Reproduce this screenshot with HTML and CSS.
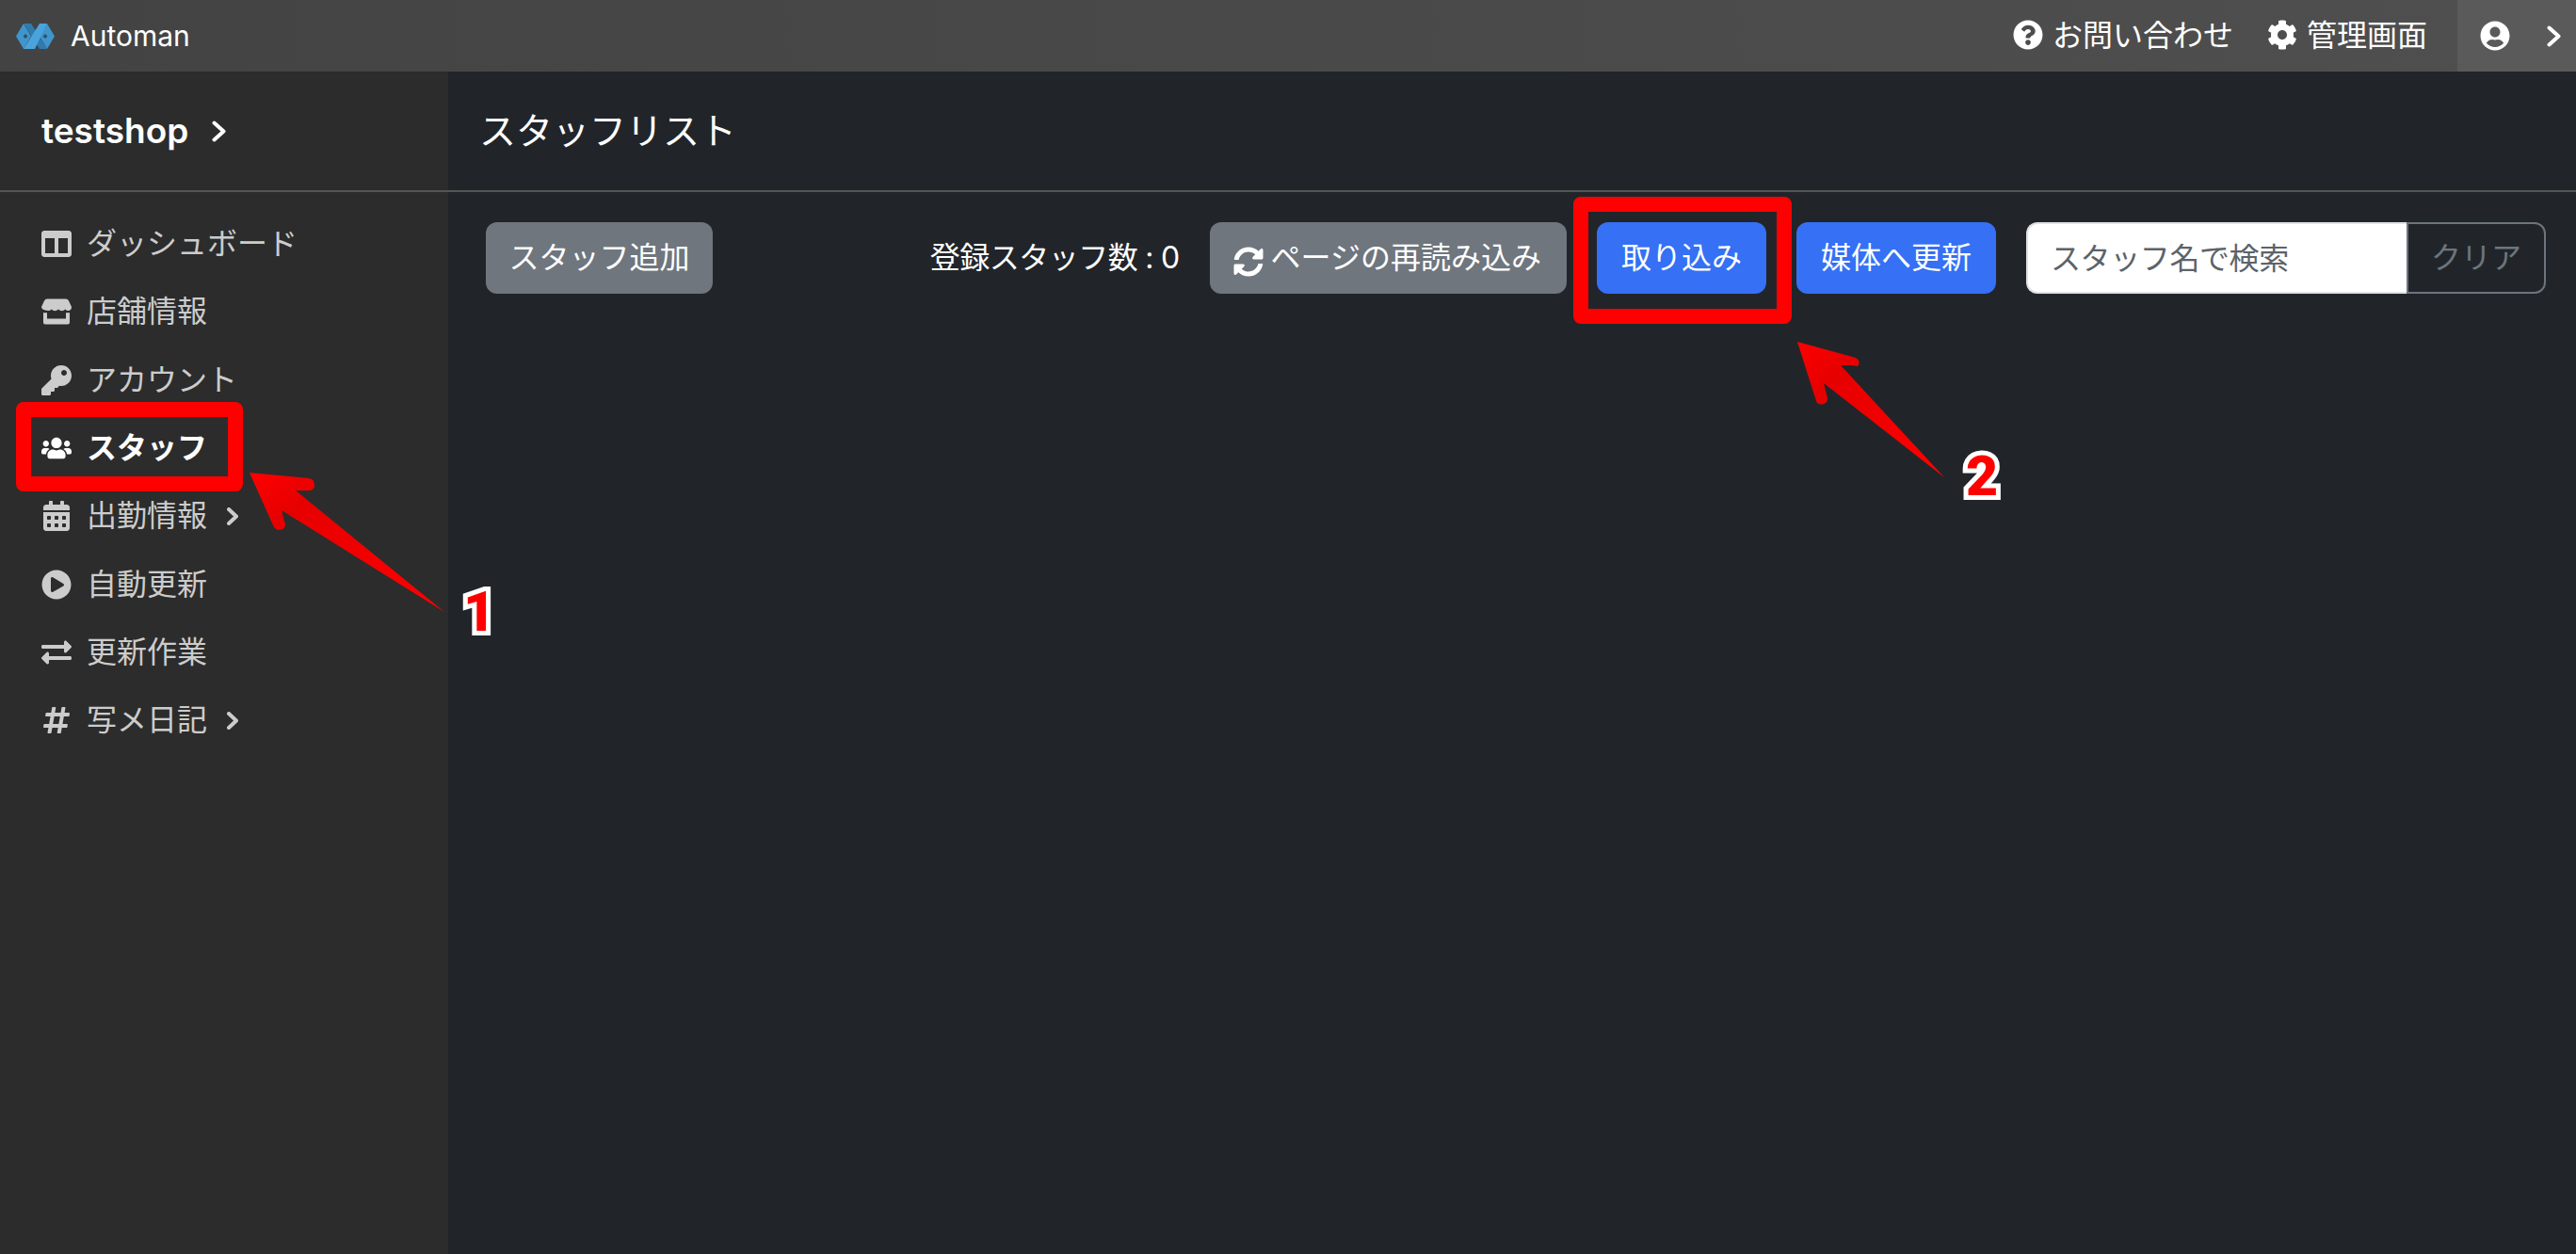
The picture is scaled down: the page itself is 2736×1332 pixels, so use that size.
FILE: index.html
```html
<!DOCTYPE html>
<html lang="ja">
<head>
  <meta charset="UTF-8" />
  <meta name="viewport" content="width=device-width, initial-scale=1.0" />
  <title>Automan</title>
  <link rel="stylesheet" href="styles.css">
</head>
<body>
  <header class="topbar">
    <a class="brand">
      <svg class="brand-logo" viewBox="0 0 41 27">
        <path fill="#3f95cc" d="M0 13.500 8 0l8 13.500L8 27z"/>
        <path fill="#3f95cc" d="M41 13.500 33 0l-8 13.500L33 27z"/>
        <path fill="#2f7bad" d="M8 0h8l17 27h-8z"/>
        <path fill="#4aa3dc" d="M25 0h8L20 27H8z"/>
        <path fill="#2d5068" d="m10 11 2.500 2.500-2.500 2.500-2.500-2.500zM31 11l2.500 2.500-2.500 2.500-2.500-2.500z"/>
      </svg>
      <span class="brand-name">Automan</span>
    </a>
    <nav class="topbar-links">
      <a class="topbar-link">
        <svg class="icon" viewBox="0 0 512 512"><path d="M504 256c0 136.997-111.043 248-248 248S8 392.997 8 256C8 119.083 119.043 8 256 8s248 111.083 248 248zM262.655 90c-54.497 0-89.255 22.957-116.549 63.758-3.536 5.286-2.353 12.415 2.715 16.258l34.699 26.31c5.205 3.947 12.621 3.008 16.665-2.122 17.864-22.658 30.113-35.797 57.303-35.797 20.429 0 45.698 13.148 45.698 32.958 0 14.976-12.363 22.667-32.534 33.976C247.128 238.528 216 254.941 216 296v4c0 6.627 5.373 12 12 12h56c6.627 0 12-5.373 12-12v-1.333c0-28.462 83.186-29.647 83.186-106.667 0-58.002-60.165-102-116.531-102zM256 338c-25.365 0-46 20.635-46 46 0 25.364 20.635 46 46 46s46-20.636 46-46c0-25.365-20.635-46-46-46z"/></svg>
        <span>お問い合わせ</span>
      </a>
      <a class="topbar-link">
        <svg class="icon" viewBox="0 0 512 512"><path d="M487.4 315.7l-42.6-24.6c4.3-23.2 4.3-47 0-70.2l42.6-24.6c4.9-2.8 7.1-8.6 5.5-14-11.1-35.6-30-67.8-54.7-94.6-3.8-4.1-10-5.1-14.8-2.3L380.8 110c-17.9-15.4-38.5-27.3-60.8-35.1V25.800c0-5.600-3.900-10.500-9.400-11.700-36.700-8.200-74.300-7.800-109.200 0-5.500 1.200-9.400 6.100-9.400 11.700V75c-22.200 7.900-42.800 19.800-60.800 35.100L88.700 85.500c-4.900-2.800-11-1.900-14.800 2.300-24.700 26.700-43.600 58.900-54.700 94.600-1.700 5.400.6 11.200 5.500 14L67.300 221c-4.300 23.200-4.300 47 0 70.200l-42.600 24.600c-4.900 2.800-7.100 8.600-5.500 14 11.100 35.600 30 67.800 54.700 94.600 3.800 4.100 10 5.100 14.800 2.300l42.600-24.600c17.900 15.400 38.500 27.300 60.800 35.100v49.200c0 5.600 3.900 10.500 9.400 11.700 36.700 8.200 74.300 7.800 109.200 0 5.500-1.200 9.400-6.100 9.400-11.700v-49.200c22.200-7.900 42.800-19.800 60.800-35.100l42.600 24.600c4.900 2.800 11 1.900 14.800-2.300 24.700-26.700 43.600-58.900 54.700-94.600 1.500-5.500-.7-11.300-5.600-14.100zM256 336c-44.100 0-80-35.900-80-80s35.900-80 80-80 80 35.900 80 80-35.900 80-80 80z"/></svg>
        <span>管理画面</span>
      </a>
    </nav>
    <a class="topbar-user">
      <svg class="icon" viewBox="0 0 496 512"><path d="M248 8C111 8 0 119 0 256s111 248 248 248 248-111 248-248S385 8 248 8zm0 96c48.600 0 88 39.400 88 88s-39.400 88-88 88-88-39.400-88-88 39.400-88 88-88zm0 344c-58.700 0-111.300-26.600-146.500-68.200 18.800-35.400 55.600-59.800 98.500-59.800 2.400 0 4.800.4 7.100 1.100 13 4.200 26.600 6.900 40.900 6.900 14.300 0 28-2.700 40.900-6.900 2.300-.7 4.700-1.100 7.100-1.100 42.900 0 79.700 24.400 98.500 59.800C359.300 421.400 306.700 448 248 448z"/></svg>
      <svg class="chevron chevron-lg" viewBox="0 0 15 23"><path d="M2.500 2.500l10 9-10 9"/></svg>
    </a>
  </header>

  <div class="layout">
    <aside class="sidebar">
      <a class="shop-name">
        <span>testshop</span>
        <svg class="chevron chevron-lg" viewBox="0 0 15 23"><path d="M2.500 2.500l10 9-10 9"/></svg>
      </a>
      <ul class="side-menu">
        <li class="side-item">
          <svg class="icon" viewBox="0 0 512 512"><path d="M464 32H48C21.490 32 0 53.490 0 80v352c0 26.510 21.490 48 48 48h416c26.510 0 48-21.490 48-48V80c0-26.510-21.490-48-48-48zM224 416H64V160h160v256zm224 0H288V160h160v256z"/></svg>
          <span>ダッシュボード</span>
        </li>
        <li class="side-item">
          <svg class="icon" viewBox="0 0 32 27"><path d="M6 0h20q2 0 3 2l3 6.500q0 3.500-3 4-2.200.3-3.700-1.500-1.500 1.800-3.600 1.800t-3.700-1.800q-1.600 1.800-3.700 1.800t-3.600-1.800Q9.200 12.800 7 12.500q-7-.5-7-4L3 2q1-2 3-2z"/><path d="M2 14.500q2.500.6 4 0V21h20v-6.500q1.500.6 4 0V25q0 2-2 2H4q-2 0-2-2z"/></svg>
          <span>店舗情報</span>
        </li>
        <li class="side-item">
          <svg class="icon" viewBox="0 0 512 512"><path d="M512 176.001C512 273.203 433.202 352 336 352c-11.220 0-22.190-1.062-32.827-3.069l-24.012 27.014A23.999 23.999 0 0 1 261.223 384H224v40c0 13.255-10.745 24-24 24h-40v40c0 13.255-10.745 24-24 24H24c-13.255 0-24-10.745-24-24v-78.059c0-6.365 2.529-12.470 7.029-16.971l161.802-161.802C163.108 213.814 160 195.271 160 176 160 78.798 238.797.001 335.999 0 433.488-.001 512 78.511 512 176.001zM336 128c0 26.510 21.490 48 48 48s48-21.490 48-48-21.490-48-48-48-48 21.490-48 48z"/></svg>
          <span>アカウント</span>
        </li>
        <li class="side-item active">
          <svg class="icon" viewBox="0 0 640 512"><path d="M96 224c35.300 0 64-28.700 64-64s-28.700-64-64-64-64 28.700-64 64 28.700 64 64 64zm448 0c35.300 0 64-28.700 64-64s-28.700-64-64-64-64 28.700-64 64 28.700 64 64 64zm32 32h-64c-17.600 0-33.500 7.100-45.100 18.600 40.300 22.100 68.900 62 75.100 109.400h66c17.700 0 32-14.300 32-32v-32c0-35.300-28.700-64-64-64zm-256 0c61.900 0 112-50.100 112-112S381.900 32 320 32 208 82.100 208 144s50.100 112 112 112zm76.800 32h-8.300c-20.800 10-43.900 16-68.500 16s-47.600-6-68.500-16h-8.300C179.600 288 128 339.600 128 403.200V432c0 26.500 21.500 48 48 48h288c26.500 0 48-21.500 48-48v-28.800c0-63.600-51.600-115.200-115.200-115.200zm-223.700-13.400C161.500 263.100 145.600 256 128 256H64c-35.300 0-64 28.700-64 64v32c0 17.700 14.300 32 32 32h65.900c6.300-47.400 34.900-87.300 75.200-109.400z"/></svg>
          <span>スタッフ</span>
        </li>
        <li class="side-item">
          <svg class="icon" viewBox="0 0 448 512"><path d="M0 464c0 26.500 21.500 48 48 48h352c26.500 0 48-21.500 48-48V192H0v272zm320-196c0-6.600 5.400-12 12-12h40c6.600 0 12 5.400 12 12v40c0 6.600-5.400 12-12 12h-40c-6.600 0-12-5.400-12-12v-40zm0 128c0-6.600 5.400-12 12-12h40c6.600 0 12 5.400 12 12v40c0 6.600-5.400 12-12 12h-40c-6.600 0-12-5.400-12-12v-40zM192 268c0-6.600 5.400-12 12-12h40c6.600 0 12 5.400 12 12v40c0 6.600-5.400 12-12 12h-40c-6.600 0-12-5.400-12-12v-40zm0 128c0-6.600 5.400-12 12-12h40c6.600 0 12 5.400 12 12v40c0 6.600-5.400 12-12 12h-40c-6.600 0-12-5.400-12-12v-40zM64 268c0-6.600 5.400-12 12-12h40c6.600 0 12 5.400 12 12v40c0 6.600-5.400 12-12 12H76c-6.600 0-12-5.400-12-12v-40zm0 128c0-6.600 5.400-12 12-12h40c6.600 0 12 5.400 12 12v40c0 6.600-5.400 12-12 12H76c-6.600 0-12-5.400-12-12v-40zM400 64h-48V16c0-8.800-7.200-16-16-16h-32c-8.800 0-16 7.200-16 16v48H160V16c0-8.800-7.200-16-16-16h-32c-8.800 0-16 7.200-16 16v48H48C21.500 64 0 85.500 0 112v48h448v-48c0-26.500-21.500-48-48-48z"/></svg>
          <span>出勤情報</span>
          <svg class="chevron" viewBox="0 0 12 19"><path d="M2 2l8 7.500-8 7.500"/></svg>
        </li>
        <li class="side-item">
          <svg class="icon" viewBox="0 0 512 512"><path d="M256 8C119 8 8 119 8 256s111 248 248 248 248-111 248-248S393 8 256 8zm115.700 272l-176 101c-15.800 8.800-35.700-2.500-35.700-21V152c0-18.400 19.800-29.800 35.700-21l176 107c16.400 9.200 16.400 32.900 0 42z"/></svg>
          <span>自動更新</span>
        </li>
        <li class="side-item">
          <svg class="icon" viewBox="0 0 512 512"><path d="M0 168v-16c0-13.255 10.745-24 24-24h360V80c0-21.367 25.899-32.042 40.971-16.971l80 80c9.372 9.373 9.372 24.569 0 33.941l-80 80C409.956 271.982 384 261.456 384 240v-48H24c-13.255 0-24-10.745-24-24zm488 152H128v-48c0-21.314-25.862-32.080-40.971-16.971l-80 80c-9.372 9.373-9.372 24.569 0 33.941l80 80C102.057 463.997 128 453.437 128 432v-48h360c13.255 0 24-10.745 24-24v-16c0-13.255-10.745-24-24-24z"/></svg>
          <span>更新作業</span>
        </li>
        <li class="side-item">
          <svg class="icon" viewBox="0 0 448 512"><path d="M440.667 182.109l7.143-40c1.313-7.355-4.342-14.109-11.813-14.109h-74.810l14.623-81.891C377.123 38.754 371.468 32 363.997 32h-40.632a12 12 0 0 0-11.813 9.891L296.175 128H197.540l14.623-81.891C213.477 38.754 207.822 32 200.350 32h-40.632a12 12 0 0 0-11.813 9.891L132.528 128H53.432a12 12 0 0 0-11.813 9.891l-7.143 40C33.163 185.246 38.818 192 46.289 192h74.810L98.242 320H19.146a12 12 0 0 0-11.813 9.891l-7.143 40C-1.123 377.246 4.532 384 12.003 384h74.810L72.190 465.891C70.877 473.246 76.532 480 84.003 480h40.632a12 12 0 0 0 11.813-9.891L151.826 384h98.634l-14.623 81.891C234.523 473.246 240.178 480 247.650 480h40.632a12 12 0 0 0 11.813-9.891L315.472 384h79.096a12 12 0 0 0 11.813-9.891l7.143-40c1.313-7.355-4.342-14.109-11.813-14.109h-74.810l22.857-128h79.096a12 12 0 0 0 11.813-9.891zM261.889 320h-98.634l22.857-128h98.634l-22.857 128z"/></svg>
          <span>写メ日記</span>
          <svg class="chevron" viewBox="0 0 12 19"><path d="M2 2l8 7.500-8 7.500"/></svg>
        </li>
      </ul>
    </aside>

    <main class="content">
      <h1 class="page-title">スタッフリスト</h1>
      <div class="toolbar">
        <button class="btn btn-gray">スタッフ追加</button>
        <div class="toolbar-right">
          <span class="staff-count">登録スタッフ数 : 0</span>
          <button class="btn btn-gray btn-reload">
            <svg class="icon" viewBox="0 0 512 512"><path d="M370.720 133.280C339.458 104.008 298.888 87.962 255.848 88c-77.458.068-144.328 53.178-162.791 126.850-1.344 5.363-6.122 9.150-11.651 9.150H24.103c-7.498 0-13.194-6.807-11.807-14.176C33.933 94.924 134.813 8 256 8c66.448 0 126.791 26.136 171.315 68.685L463.030 40.970C478.149 25.851 504 36.559 504 57.941V192c0 13.255-10.745 24-24 24H345.941c-21.382 0-32.090-25.851-16.971-40.971l41.750-41.749zM32 296h134.059c21.382 0 32.090 25.851 16.971 40.971l-41.750 41.750c31.262 29.273 71.835 45.319 114.876 45.280 77.418-.07 144.315-53.144 162.787-126.849 1.344-5.363 6.122-9.150 11.651-9.150h57.304c7.498 0 13.194 6.807 11.807 14.176C478.067 417.076 377.187 504 256 504c-66.448 0-126.791-26.136-171.315-68.685L48.970 471.030C33.851 486.149 8 475.441 8 454.059V320c0-13.255 10.745-24 24-24z"/></svg>
            <span>ページの再読み込み</span>
          </button>
          <button class="btn btn-blue">取り込み</button>
          <button class="btn btn-blue">媒体へ更新</button>
          <div class="search-group">
            <input class="search-input" type="text" placeholder="スタッフ名で検索">
            <button class="btn btn-clear">クリア</button>
          </div>
        </div>
      </div>
    </main>
  </div>

  <!-- annotations drawn over the screenshot -->
  <div class="mark mark-staff"></div>
  <div class="mark mark-import"></div>
  <svg class="arrows" viewBox="0 0 2736 1332">
    <defs>
      <linearGradient id="arrowRed" x1="0" y1="0" x2="1" y2="1">
        <stop offset="0" stop-color="#f00"/>
        <stop offset="0.25" stop-color="#e60000"/>
        <stop offset="1" stop-color="#f00"/>
      </linearGradient>
    </defs>
    <path fill="url(#arrowRed)" d="M265 502l63 6q6 1 6 7t-6 6h-14L472 650 299 542l4 15q0 5-6 6-5 0-7-5z"/>
    <path fill="url(#arrowRed)" d="M1909 363l62 17q5 3 3 8-1 2-6 0h-13l110 119-128-100 4 16q0 5-4 6-6 2-8-3z"/>
  </svg>
  <span class="step step-one">1</span>
  <span class="step step-two">2</span>
</body>
</html>
```

FILE: styles.css
```css
* {
  box-sizing: border-box;
}

body {
  margin: 0;
  width: 2736px;
  height: 1332px;
  overflow: hidden;
  position: relative;
  background: #212529;
  color: #fff;
  font-family: Inter, "Noto Sans CJK JP", sans-serif;
  font-size: 32px;
  line-height: 48px;
}

.icon {
  width: 32px;
  height: 32px;
  flex: none;
  fill: currentColor;
}

.chevron {
  width: 12px;
  height: 19px;
  flex: none;
  fill: none;
  stroke: currentColor;
  stroke-width: 4;
  stroke-linecap: round;
  stroke-linejoin: round;
}

.chevron-lg {
  width: 15px;
  height: 23px;
}

/* top bar */
.topbar {
  height: 76px;
  display: flex;
  align-items: center;
  background: linear-gradient(90deg, #434343, #4f4f4f);
}

.brand {
  display: flex;
  align-items: center;
  gap: 17px;
  padding-left: 17px;
  margin-right: auto;
}

.brand-logo {
  width: 41px;
  height: 27px;
}

.brand-name {
  font-size: 30px;
}

.topbar-links {
  display: flex;
  gap: 36px;
  padding-right: 32px;
}

.topbar-link {
  display: flex;
  align-items: center;
  gap: 10px;
}

.topbar-link .icon {
  margin-top: -2px;
}

.topbar-user {
  width: 126px;
  height: 76px;
  display: flex;
  align-items: center;
  gap: 39px;
  padding-left: 24px;
  background: #5a5a5a;
}

/* sidebar */
.layout {
  display: flex;
  height: 1256px;
}

.sidebar {
  width: 476px;
  background: #2c2c2c;
}

.shop-name {
  height: 128px;
  display: flex;
  align-items: center;
  gap: 25px;
  padding-left: 44px;
  border-bottom: 2px solid #555;
  font-size: 37px;
  font-weight: 600;
}

.side-menu {
  list-style: none;
  margin: 0;
  padding: 19px 0 0;
}

.side-item {
  height: 72.3px;
  display: flex;
  align-items: center;
  gap: 16px;
  padding-left: 44px;
  color: #ccc;
}

.side-item .chevron {
  margin-left: 5px;
}

.side-item.active {
  color: #fff;
  font-weight: 700;
}

/* main column */
.content {
  flex: 1;
}

.page-title {
  height: 128px;
  margin: 0;
  display: flex;
  align-items: center;
  padding-left: 33px;
  border-bottom: 2px solid #555;
  font-size: 39px;
  font-weight: 400;
}

.toolbar {
  display: flex;
  justify-content: space-between;
  padding: 32px 32px 0 40px;
}

.toolbar-right {
  display: flex;
  align-items: center;
  gap: 32px;
}

.staff-count {
  letter-spacing: -0.5px;
  word-spacing: -0.5px;
}

.btn {
  height: 76px;
  padding: 0 25px;
  border: 1px solid transparent;
  border-radius: 12px;
  color: #fff;
  font: inherit;
  display: flex;
  align-items: center;
}

.btn-gray {
  padding: 0 23.5px;
  background: #6f767e;
}

.btn-blue {
  background: #3570f5;
}

.btn-reload {
  gap: 8px;
  padding: 0 26px 0 24px;
}

.btn-reload .icon {
  margin-top: 8px;
}

.search-group {
  display: flex;
}

.search-input {
  width: 404px;
  height: 76px;
  padding: 0 24px;
  border: 2px solid #dee2e6;
  border-right: 0;
  border-radius: 12px 0 0 12px;
  background: #fff;
  color: #212529;
  font: inherit;
  letter-spacing: -0.4px;
  outline: none;
}

.search-input::placeholder {
  color: #5c636a;
  opacity: 1;
}

.btn-clear {
  width: 148px;
  padding: 0 24px;
  background: transparent;
  border: 2px solid #6c757d;
  border-radius: 0 12px 12px 0;
  color: #6c757d;
}

/* annotations */
.mark {
  position: absolute;
  border: 16px solid #f00;
  border-radius: 8px;
}

.mark-staff {
  left: 17px;
  top: 427px;
  width: 241px;
  height: 95px;
}

.mark-import {
  left: 1671px;
  top: 209px;
  width: 232px;
  height: 135px;
}

.arrows {
  position: absolute;
  left: 0;
  top: 0;
  width: 2736px;
  height: 1332px;
}

.step {
  position: absolute;
  color: #f00;
  font-family: Roboto, sans-serif;
  font-size: 59px;
  font-weight: 900;
  line-height: 59px;
  -webkit-text-stroke: 10px #fff;
  paint-order: stroke fill;
}

.step-one {
  left: 492px;
  top: 620px;
}

.step-two {
  left: 2088px;
  top: 476px;
}
```
